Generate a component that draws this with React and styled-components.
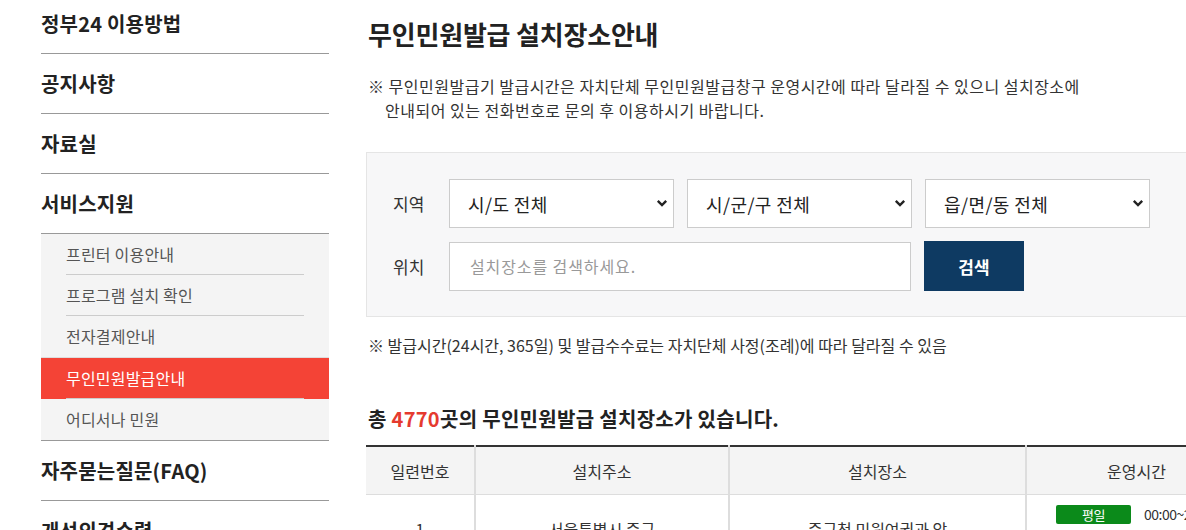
import React from "react";
import styled, { createGlobalStyle } from "styled-components";

const GlobalStyle = createGlobalStyle`
  html, body {
    margin: 0;
    padding: 0;
    overflow: hidden;
    background: #fff;
  }
  body {
    font-family: "Noto Sans CJK KR", "Noto Sans", sans-serif;
    color: #333;
  }
`;

const Page = styled.div`
  display: flex;
  gap: 37px;
  padding-left: 41px;
  width: 1400px;
`;

const Sidebar = styled.nav`
  width: 288px;
  flex-shrink: 0;
  margin-top: -6px;
`;

const MenuItem = styled.div`
  height: 59px;
  display: flex;
  align-items: center;
  border-bottom: 1px solid #999;
  font-size: 20px;
  font-weight: 700;
  color: #222;
  letter-spacing: 0.2px;
`;

const SubList = styled.div`
  background: #f4f4f4;
  border-bottom: 1px solid #999;
`;

const SubItem = styled.div`
  padding: 0 25px;
  background: ${(p) => (p.$active ? "#f44336" : "transparent")};
  border-top: ${(p) => (p.$active ? "1px solid #ddd" : "none")};
`;

const SubLink = styled.div`
  height: 40px;
  display: flex;
  align-items: center;
  font-size: 16px;
  color: ${(p) => (p.$active ? "#fff" : "#555")};
  border-bottom: ${(p) => (p.$line ? "1px solid #ccc" : "1px solid transparent")};
  letter-spacing: 0.2px;
`;

const Main = styled.main`
  width: 880px;
  padding-top: 15px;
`;

const Title = styled.h2`
  margin: 0 0 0 2px;
  font-size: 26px;
  line-height: 38px;
  font-weight: 700;
  color: #222;
  letter-spacing: -0.2px;
`;

const Notice = styled.p`
  margin: 21px 0 0 2px;
  font-size: 16px;
  line-height: 24px;
  color: #333;
  letter-spacing: 0.5px;
  padding-left: 17px;
  text-indent: -17px;
`;

const SearchBox = styled.div`
  margin-top: 30px;
  background: #f7f7f8;
  border: 1px solid #e5e5e5;
  padding: 26px 26px 25px;
  display: flex;
  flex-direction: column;
  gap: 13px;
`;

const SearchRow = styled.div`
  display: flex;
  align-items: center;
  gap: 13px;
`;

const Label = styled.span`
  width: 43px;
  font-size: 17px;
  color: #333;
`;

const SelectWrap = styled.div`
  position: relative;
  width: 225px;
  height: 49px;
`;

const Select = styled.select`
  appearance: none;
  width: 100%;
  height: 100%;
  box-sizing: border-box;
  border: 1px solid #ccc;
  background: #fff;
  padding: 0 34px 0 18px;
  font-family: inherit;
  font-size: 18px;
  letter-spacing: 0.4px;
  color: #222;
  outline: none;
`;

const Chevron = styled.svg`
  position: absolute;
  right: 6px;
  top: 20px;
  pointer-events: none;
`;

const Input = styled.input`
  width: 462px;
  height: 49px;
  box-sizing: border-box;
  border: 1px solid #ccc;
  background: #fff;
  padding: 0 20px;
  font-family: inherit;
  font-size: 16px;
  letter-spacing: 0.9px;
  color: #333;
  outline: none;
  &::placeholder {
    color: #999;
  }
`;

const Button = styled.button`
  width: 100px;
  height: 50px;
  border: 0;
  background: #0e3a62;
  color: #fff;
  font-family: inherit;
  font-size: 17px;
  font-weight: 700;
`;

const Note = styled.p`
  margin: 16px 0 0 2px;
  font-size: 16px;
  line-height: 24px;
  color: #333;
  letter-spacing: 0;
`;

const Count = styled.h3`
  margin: 47px 0 0 2px;
  font-size: 20px;
  line-height: 30px;
  font-weight: 700;
  color: #222;
  letter-spacing: 0.3px;
`;

const Num = styled.span`
  color: #e53a2f;
`;

const Table = styled.table`
  margin-top: 11px;
  width: 100%;
  border-collapse: collapse;
  border-top: 2px solid #333;
  table-layout: fixed;
`;

const Th = styled.th`
  background: #f4f4f4;
  height: 47px;
  padding: 0;
  font-size: 16px;
  font-weight: 400;
  color: #333;
  border-bottom: 1px solid #ddd;
  border-left: 2px solid #ddd;
  &:first-child {
    border-left: 0;
  }
`;

const Td = styled.td`
  height: 68px;
  padding: 0;
  font-size: 16px;
  color: #333;
  text-align: center;
  vertical-align: middle;
  border-left: 2px solid #ddd;
  &:first-child {
    border-left: 0;
  }
`;

const TimeCell = styled.div`
  display: flex;
  align-items: center;
  gap: 13px;
  padding-left: 29px;
  margin-top: -25px;
  font-size: 14px;
  letter-spacing: -0.5px;
  white-space: nowrap;
`;

const Badge = styled.span`
  flex-shrink: 0;
  width: 75px;
  height: 19px;
  border-radius: 2px;
  background: #0b8a1a;
  color: #fff;
  font-size: 13px;
  line-height: 19px;
  text-align: center;
`;

const ChevronIcon = () => (
  <Chevron width="12" height="9" viewBox="0 0 12 9">
    <path d="M1.8 1.8 L6 6 L10.2 1.8" fill="none" stroke="#222" strokeWidth="2.4" />
  </Chevron>
);

const menus = ["정부24 이용방법", "공지사항", "자료실", "서비스지원"];
const subs = ["프린터 이용안내", "프로그램 설치 확인", "전자결제안내", "무인민원발급안내", "어디서나 민원"];
const regions = ["시/도 전체", "시/군/구 전체", "읍/면/동 전체"];
const activeIndex = 3;

const App = () => {
  return (
    <>
      <GlobalStyle />
      <Page>
        <Sidebar>
          {menus.map((m) => (
            <MenuItem key={m}>{m}</MenuItem>
          ))}
          <SubList>
            {subs.map((s, i) => (
              <SubItem key={s} $active={i === activeIndex}>
                <SubLink
                  $active={i === activeIndex}
                  $line={i !== subs.length - 1 && i !== activeIndex - 1}
                >
                  {s}
                </SubLink>
              </SubItem>
            ))}
          </SubList>
          <MenuItem>자주묻는질문(FAQ)</MenuItem>
          <MenuItem>개선의견수렴</MenuItem>
        </Sidebar>

        <Main>
          <Title>무인민원발급 설치장소안내</Title>
          <Notice>
            ※ 무인민원발급기 발급시간은 자치단체 무인민원발급창구 운영시간에 따라 달라질 수 있으니 설치장소에
            <br />
            안내되어 있는 전화번호로 문의 후 이용하시기 바랍니다.
          </Notice>

          <SearchBox>
            <SearchRow>
              <Label>지역</Label>
              {regions.map((r) => (
                <SelectWrap key={r}>
                  <Select defaultValue="">
                    <option value="">{r}</option>
                  </Select>
                  <ChevronIcon />
                </SelectWrap>
              ))}
            </SearchRow>
            <SearchRow>
              <Label>위치</Label>
              <Input placeholder="설치장소를 검색하세요." />
              <Button>검색</Button>
            </SearchRow>
          </SearchBox>

          <Note>※ 발급시간(24시간, 365일) 및 발급수수료는 자치단체 사정(조례)에 따라 달라질 수 있음</Note>

          <Count>
            총 <Num>4770</Num>곳의 무인민원발급 설치장소가 있습니다.
          </Count>

          <Table>
            <colgroup>
              <col style={{ width: 109 }} />
              <col style={{ width: 254 }} />
              <col style={{ width: 297 }} />
              <col />
            </colgroup>
            <thead>
              <tr>
                <Th>일련번호</Th>
                <Th>설치주소</Th>
                <Th>설치장소</Th>
                <Th>운영시간</Th>
              </tr>
            </thead>
            <tbody>
              <tr>
                <Td>1</Td>
                <Td>서울특별시 중구</Td>
                <Td>중구청 민원여권과 앞</Td>
                <Td>
                  <TimeCell>
                    <Badge>평일</Badge>
                    00:00~24:00
                  </TimeCell>
                </Td>
              </tr>
            </tbody>
          </Table>
        </Main>
      </Page>
    </>
  );
};

export default App;
